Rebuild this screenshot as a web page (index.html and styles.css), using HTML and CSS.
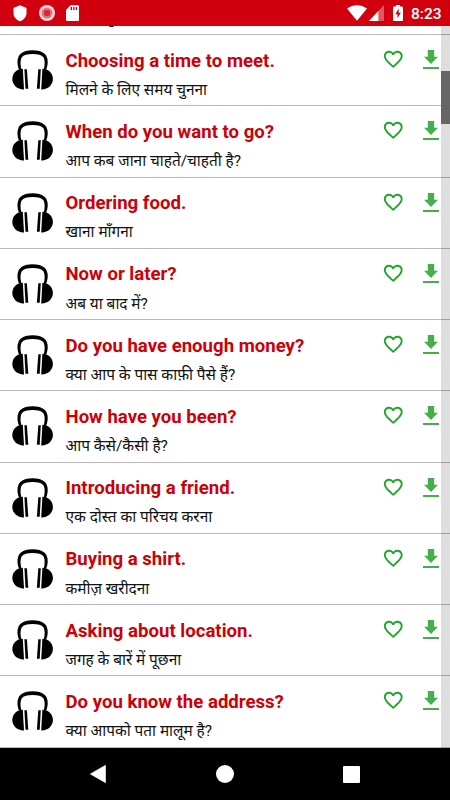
FILE: index.html
```
<!DOCTYPE html>
<html lang="hi">
<head>
    <meta charset="UTF-8">
    <meta name="viewport" content="width=device-width, initial-scale=1.0">
    <title>Conversations</title>
    <link rel="stylesheet" href="styles.css">
</head>
<body>
<!-- icons -->
<svg class="sprite" width="0" height="0">
    <symbol id="headphones" viewBox="0 0 42 40">
        <path d="M7 19.800C5.200 15.500 4.800 10.500 6.600 6.600C6.900 5.400 7.600 5 8.300 4C11.500 1 15.500.2 20.600.2S29.700 1 32.900 4C33.600 5 34.300 5.400 34.600 6.600C36.400 10.500 36 15.500 34.200 19.800L31.900 18.900C33 14.500 33 10.800 31.600 7.600C29.500 5 26 4.100 20.600 4.100S11.700 5 9.600 7.600C8.200 10.800 8.200 14.500 9.300 18.900Z"/>
        <path d="M10.800 18.700C4.800 18.700.3 23 .3 29C.3 35 5.500 39.700 12 39.400Z"/>
        <path d="M30.400 18.700C36.400 18.700 40.900 23 40.900 29C40.900 35 35.700 39.700 29.200 39.400Z"/>
        <path d="M12.400 19.200L14.900 19.200L16.300 38.700L13.500 38.700Z"/>
        <path d="M28.800 19.200L26.300 19.200L24.900 38.700L27.700 38.700Z"/>
    </symbol>
    <symbol id="heart" viewBox="0 0 24 24">
        <path d="M16.500 3c-1.740 0-3.410.81-4.500 2.090C10.910 3.810 9.240 3 7.500 3 4.420 3 2 5.420 2 8.500c0 3.780 3.400 6.860 8.550 11.540L12 21.350l1.450-1.320C18.600 15.360 22 12.280 22 8.500 22 5.420 19.580 3 16.500 3zm-4.400 15.550l-.1.100-.1-.1C7.140 14.240 4 11.390 4 8.500 4 6.500 5.500 5 7.500 5c1.540 0 3.040.99 3.570 2.360h1.870C13.460 5.990 14.960 5 16.500 5c2 0 3.500 1.500 3.500 3.500 0 2.890-3.140 5.740-7.900 10.050z"/>
    </symbol>
    <symbol id="download" viewBox="0 0 16 19">
        <path d="M4.800 0h6.400v6.800H15L8 14 1 6.800h3.800z"/>
        <path d="M0 17h16v2H0z"/>
    </symbol>
</svg>

<div class="screen">
    <div class="status-bar">
        <div class="status-left">
            <svg width="14" height="17" viewBox="0 0 14 17"><path d="M7 .3L13.500 3v5c0 4-2.700 6.800-6.500 8.300C3.200 14.800.5 12 .5 8V3z" fill="#fff"/></svg>
            <svg width="16" height="16" viewBox="0 0 16 16"><circle cx="8" cy="8" r="8" fill="#fff" opacity=".85"/><circle cx="8" cy="8" r="5.500" fill="#e27480"/><circle cx="8" cy="8" r="3.200" fill="#d6293a"/></svg>
            <svg width="13" height="16" viewBox="0 0 13 16"><path d="M4.500.3H12a1 1 0 0 1 1 1V15a1 1 0 0 1-1 1H1a1 1 0 0 1-1-1V5z" fill="#fff"/><path d="M4.600 2h1.400v3H4.600zM7.200 2h1.400v3H7.200zM9.800 2h1.400v3H9.800z" fill="#d0000f"/></svg>
        </div>
        <div class="status-right">
            <svg width="20" height="16" viewBox="0 0 20 16"><path d="M0 3.600C6-1 14-1 20 3.600L10 15.800z" fill="#fff"/></svg>
            <svg class="signal" width="15" height="16" viewBox="0 0 15 16"><path d="M15 0v16H0z" fill="#fff" opacity=".35"/><path d="M9.300 6v10H0z" fill="#fff"/></svg>
            <svg class="battery" width="10" height="16" viewBox="0 0 10 16"><path d="M3 0h4v1.500h2a1 1 0 0 1 1 1V15a1 1 0 0 1-1 1H1a1 1 0 0 1-1-1V2.500a1 1 0 0 1 1-1h2z" fill="#fff"/><path d="M5.700 3.600L2.300 9.300h2.200v4L7.800 7.800H5.700z" fill="#d0000f"/></svg>
            <span class="clock">8:23</span>
        </div>
    </div>

    <div class="list">
        <div class="rows">
            <div class="row row-cut"><div class="hindi">&nbsp;ु</div></div>
            <div class="row">
                <svg class="phones"><use href="#headphones"/></svg>
                <div class="text"><div class="title">Choosing a time to meet.</div><div class="hindi">मिलने के लिए समय चुनना</div></div>
                <svg class="heart"><use href="#heart"/></svg>
                <svg class="download"><use href="#download"/></svg>
            </div>
            <div class="row">
                <svg class="phones"><use href="#headphones"/></svg>
                <div class="text"><div class="title">When do you want to go?</div><div class="hindi">आप कब जाना चाहते/चाहती है?</div></div>
                <svg class="heart"><use href="#heart"/></svg>
                <svg class="download"><use href="#download"/></svg>
            </div>
            <div class="row">
                <svg class="phones"><use href="#headphones"/></svg>
                <div class="text"><div class="title">Ordering food.</div><div class="hindi">खाना माँगना</div></div>
                <svg class="heart"><use href="#heart"/></svg>
                <svg class="download"><use href="#download"/></svg>
            </div>
            <div class="row">
                <svg class="phones"><use href="#headphones"/></svg>
                <div class="text"><div class="title">Now or later?</div><div class="hindi">अब या बाद में?</div></div>
                <svg class="heart"><use href="#heart"/></svg>
                <svg class="download"><use href="#download"/></svg>
            </div>
            <div class="row">
                <svg class="phones"><use href="#headphones"/></svg>
                <div class="text"><div class="title">Do you have enough money?</div><div class="hindi">क्या आप के पास काफ़ी पैसे हैं?</div></div>
                <svg class="heart"><use href="#heart"/></svg>
                <svg class="download"><use href="#download"/></svg>
            </div>
            <div class="row">
                <svg class="phones"><use href="#headphones"/></svg>
                <div class="text"><div class="title">How have you been?</div><div class="hindi">आप कैसे/कैसी है?</div></div>
                <svg class="heart"><use href="#heart"/></svg>
                <svg class="download"><use href="#download"/></svg>
            </div>
            <div class="row">
                <svg class="phones"><use href="#headphones"/></svg>
                <div class="text"><div class="title">Introducing a friend.</div><div class="hindi">एक दोस्त का परिचय करना</div></div>
                <svg class="heart"><use href="#heart"/></svg>
                <svg class="download"><use href="#download"/></svg>
            </div>
            <div class="row">
                <svg class="phones"><use href="#headphones"/></svg>
                <div class="text"><div class="title">Buying a shirt.</div><div class="hindi">कमीज़ खरीदना</div></div>
                <svg class="heart"><use href="#heart"/></svg>
                <svg class="download"><use href="#download"/></svg>
            </div>
            <div class="row">
                <svg class="phones"><use href="#headphones"/></svg>
                <div class="text"><div class="title">Asking about location.</div><div class="hindi">जगह के बारें में पूछना</div></div>
                <svg class="heart"><use href="#heart"/></svg>
                <svg class="download"><use href="#download"/></svg>
            </div>
            <div class="row">
                <svg class="phones"><use href="#headphones"/></svg>
                <div class="text"><div class="title">Do you know the address?</div><div class="hindi">क्या आपको पता मालूम है?</div></div>
                <svg class="heart"><use href="#heart"/></svg>
                <svg class="download"><use href="#download"/></svg>
            </div>
        </div>
        <div class="scrollbar"><div class="thumb"></div></div>
    </div>

    <div class="nav-bar">
        <svg width="16" height="18" viewBox="0 0 16 18"><path d="M15.500.3v17.400L.3 9z" fill="#fff" stroke="#fff" stroke-width=".6" stroke-linejoin="round"/></svg>
        <svg width="18" height="18" viewBox="0 0 18 18"><circle cx="9" cy="9" r="9" fill="#fff"/></svg>
        <svg width="17" height="17" viewBox="0 0 17 17"><rect width="17" height="17" rx="1" fill="#fff"/></svg>
    </div>
</div>
</body>
</html>
```
FILE: styles.css
```
* {
    box-sizing: border-box;
}
body {
    margin: 0;
    background: #fff;
    font-family: Roboto, "Noto Sans", "Noto Sans Devanagari", sans-serif;
}
.sprite {
    position: absolute;
}
.screen {
    display: flex;
    flex-direction: column;
    width: 450px;
    height: 800px;
    overflow: hidden;
}
.status-bar {
    display: flex;
    justify-content: space-between;
    flex: none;
    height: 26px;
    padding: 5px 8px 0 13px;
    background: #d0000f;
    color: #fff;
}
.status-left, .status-right {
    display: flex;
    align-items: flex-start;
}
.status-left {
    gap: 11.500px;
}
.signal {
    margin-left: 2px;
}
.battery {
    margin-left: 9px;
}
.clock {
    width: 31px;
    margin-left: 8px;
    font-size: 15.500px;
    font-weight: 500;
    line-height: 18px;
    white-space: nowrap;
}
.list {
    position: relative;
    height: 722px;
    overflow: hidden;
}
.row {
    display: flex;
    align-items: flex-start;
    height: 71.250px;
    padding-left: 12px;
    border-bottom: 1px solid #b8b8b8;
}
.row-cut {
    align-items: flex-end;
    height: 9px;
    padding: 0 0 4px 110px;
}
.phones {
    flex: none;
    width: 42px;
    height: 40px;
    margin-top: 15px;
}
.text {
    flex: 1;
    padding: 13.600px 0 0 11.500px;
    white-space: nowrap;
}
.title {
    color: #cc0007;
    font-size: 18.600px;
    font-weight: bold;
    line-height: 24px;
}
.hindi {
    margin-top: 5.400px;
    color: #111;
    font-size: 15.400px;
    line-height: 24px;
}
.heart {
    flex: none;
    width: 22.500px;
    height: 22.500px;
    margin-top: 13.200px;
    fill: #1fa52b;
}
.download {
    flex: none;
    width: 16px;
    height: 19px;
    margin: 15px 11px 0 19px;
    fill: #45af4b;
}
/* scrollbar lies over the right edge of the rows */
.scrollbar {
    position: absolute;
    top: 0;
    right: 0;
    width: 9px;
    height: 100%;
    padding-top: 45px;
    background: rgba(0, 0, 0, .13);
}
.thumb {
    height: 53px;
    background: #666;
}
.nav-bar {
    display: flex;
    flex: 1;
    align-items: center;
    justify-content: space-between;
    padding: 0 90px;
    background: #000;
}
```
